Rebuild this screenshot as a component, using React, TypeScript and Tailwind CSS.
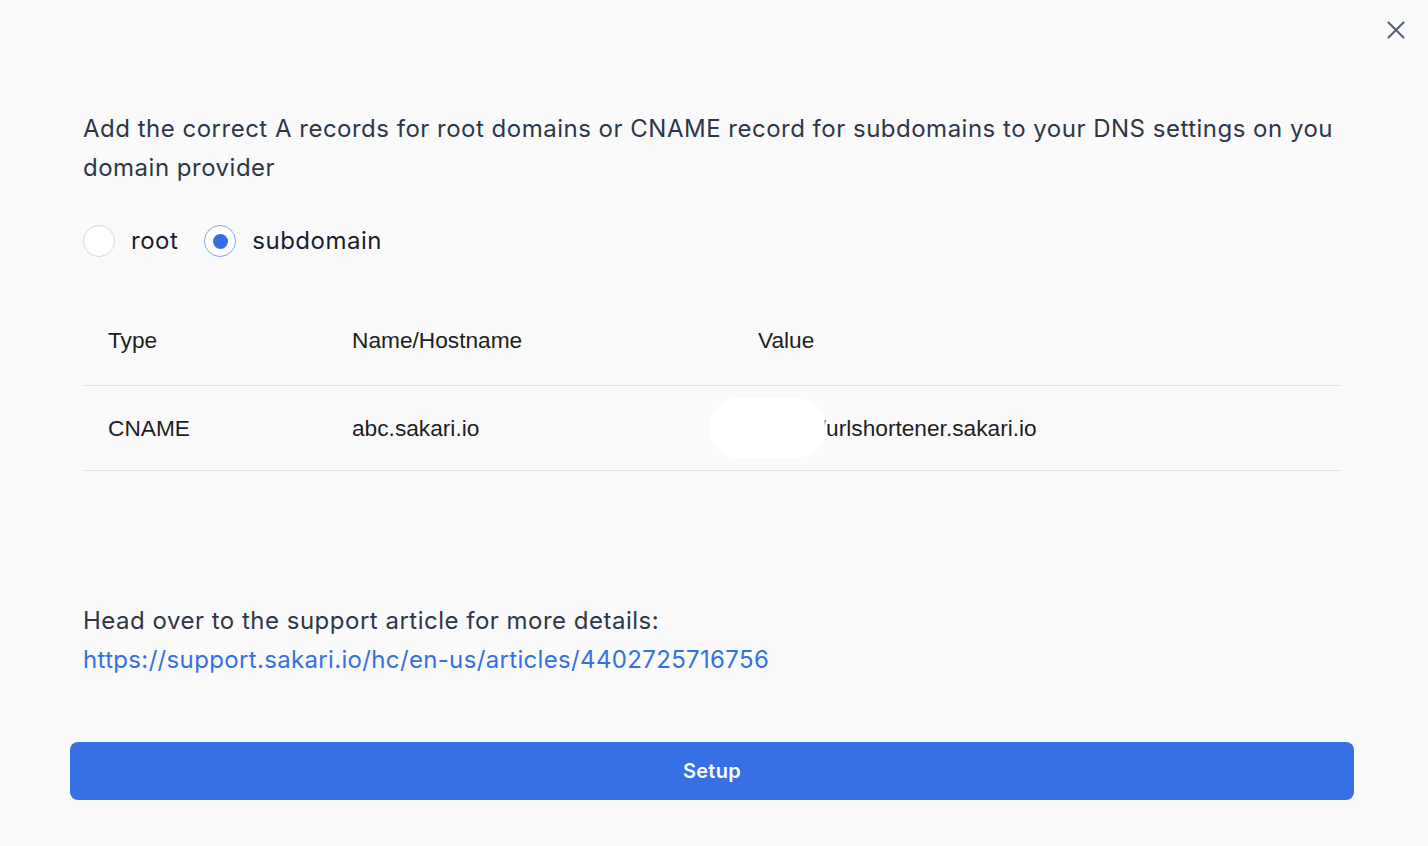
import React, { useState } from 'react';

const body = { fontFamily: 'Inter, "Noto Sans", sans-serif' };
const table = { fontFamily: '"Liberation Sans", Arial, sans-serif' };

const Radio: React.FC<{ label: string; checked: boolean; onClick: () => void }> = ({ label, checked, onClick }) => (
  <button onClick={onClick} className="flex items-center gap-4">
    <span
      className={`flex h-8 w-8 items-center justify-center rounded-full border bg-white ${
        checked ? 'border-[#7fa6f2]' : 'border-[#d6d9e0]'
      }`}
    >
      {checked && <span className="h-[15px] w-[15px] rounded-full bg-[#3570e3]" />}
    </span>
    <span className="text-[24px] tracking-[0.5px] text-[#1a202c]">{label}</span>
  </button>
);

export default function App() {
  const [kind, setKind] = useState<'root' | 'subdomain'>('subdomain');

  return (
    <div className="relative h-[846px] w-[1428px] bg-[#fafafa]" style={body}>
      <button className="absolute right-[18px] top-[16px] p-1 text-[#5b6577]" title="Close">
        <svg width="20" height="20" viewBox="0 0 20 20" fill="none" stroke="currentColor" strokeWidth="2.2" strokeLinecap="round">
          <path d="M2.5 2.5l15 15M17.5 2.5l-15 15" />
        </svg>
      </button>

      <div className="px-[70px] pt-[109px]">
        <div className="px-[13px]">
          <p className="text-[24px] leading-[39px] tracking-[0.5px] text-[#2d3748]">
            Add the correct A records for root domains or CNAME record for subdomains to your DNS settings on you domain provider
          </p>

          <div className="mt-[36px] flex items-center gap-[26px]">
            <Radio label="root" checked={kind === 'root'} onClick={() => setKind('root')} />
            <Radio label="subdomain" checked={kind === 'subdomain'} onClick={() => setKind('subdomain')} />
          </div>

          <div className="mt-[37px] w-[1258px] text-[22.7px] text-[#1e1e1e]" style={table}>
            <div className="grid h-[90px] grid-cols-[244px_406px_1fr] items-center border-b border-[#e3e3e3] pl-[25px]">
              <span>Type</span>
              <span>Name/Hostname</span>
              <span>Value</span>
            </div>
            <div className="grid h-[85px] grid-cols-[244px_406px_1fr] items-center border-b border-[#e3e3e3] pl-[25px]">
              <span>CNAME</span>
              <span>abc.sakari.io</span>
              <span className="relative">
                https://urlshortener.sakari.io
                <span className="absolute left-[-49px] top-[-13px] h-[60px] w-[117px] rounded-[30px] bg-white blur-[1px]" />
              </span>
            </div>
          </div>

          <div className="mt-[130px] text-[24px] leading-[39px] tracking-[0.5px]">
            <p className="text-[#2d3748]">Head over to the support article for more details:</p>
            <a href="#" className="tracking-[0.34px] text-[#3570e3]">
              https://support.sakari.io/hc/en-us/articles/4402725716756
            </a>
          </div>
        </div>

        <button className="mt-[63px] flex h-[58px] w-[1284px] items-center justify-center rounded-lg bg-[#3670e4] text-[20px] font-semibold tracking-[0.3px] text-white">
          Setup
        </button>
      </div>
    </div>
  );
}
